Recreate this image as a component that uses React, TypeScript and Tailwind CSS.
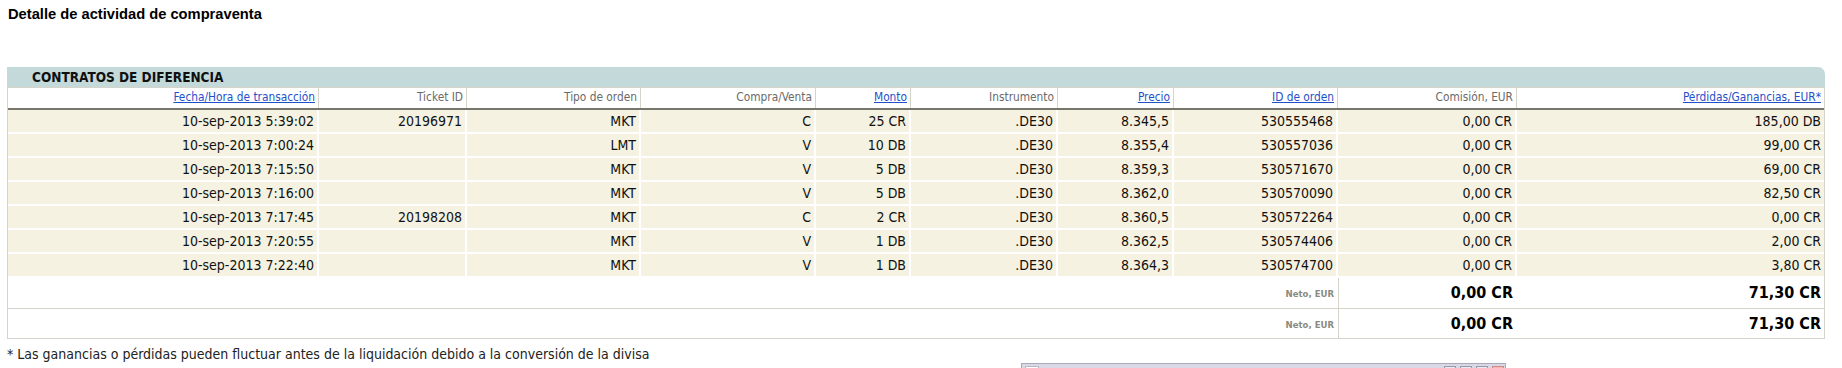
import React from 'react';

const cols = [
  { label: 'Fecha/Hora de transacción', link: true },
  { label: 'Ticket ID' },
  { label: 'Tipo de orden' },
  { label: 'Compra/Venta' },
  { label: 'Monto', link: true },
  { label: 'Instrumento' },
  { label: 'Precio', link: true },
  { label: 'ID de orden', link: true },
  { label: 'Comisión, EUR' },
  { label: 'Pérdidas/Ganancias, EUR*', link: true },
];

const rows = [
  ['10-sep-2013 5:39:02', '20196971', 'MKT', 'C', '25 CR', '.DE30', '8.345,5', '530555468', '0,00 CR', '185,00 DB'],
  ['10-sep-2013 7:00:24', '', 'LMT', 'V', '10 DB', '.DE30', '8.355,4', '530557036', '0,00 CR', '99,00 CR'],
  ['10-sep-2013 7:15:50', '', 'MKT', 'V', '5 DB', '.DE30', '8.359,3', '530571670', '0,00 CR', '69,00 CR'],
  ['10-sep-2013 7:16:00', '', 'MKT', 'V', '5 DB', '.DE30', '8.362,0', '530570090', '0,00 CR', '82,50 CR'],
  ['10-sep-2013 7:17:45', '20198208', 'MKT', 'C', '2 CR', '.DE30', '8.360,5', '530572264', '0,00 CR', '0,00 CR'],
  ['10-sep-2013 7:20:55', '', 'MKT', 'V', '1 DB', '.DE30', '8.362,5', '530574406', '0,00 CR', '2,00 CR'],
  ['10-sep-2013 7:22:40', '', 'MKT', 'V', '1 DB', '.DE30', '8.364,3', '530574700', '0,00 CR', '3,80 CR'],
];

const grid = 'grid grid-cols-[311px_148px_174px_175px_95px_147px_116px_164px_179px_307px]';

function SummaryRow({ last }: { last?: boolean }) {
  return (
    <div className={`flex ${last ? 'h-[29px]' : 'h-[31px] border-b border-[#d6d3ca]'}`}>
      <div className="w-[1330px] flex items-center justify-end pr-[4px] pt-[3px] text-[9.5px] font-bold text-[#8a8a80]">
        Neto, EUR
      </div>
      <div className="w-[179px] border-l border-[#d6d3ca] flex items-center justify-end pr-[4px] text-[16px] font-bold text-black">
        0,00 CR
      </div>
      <div className="flex-1 flex items-center justify-end pr-[3px] text-[16px] font-bold text-black">
        71,30 CR
      </div>
    </div>
  );
}

export default function App() {
  return (
    <div
      className="relative h-[368px] w-full overflow-hidden bg-white"
      style={{ fontFamily: '"DejaVu Sans Condensed", "DejaVu Sans", sans-serif' }}
    >
      {/* Title */}
      <h1
        className="pl-[8px] pt-[6px] text-[14.7px] leading-[17px] font-bold text-black"
        style={{ fontFamily: '"Liberation Sans", Arial, sans-serif' }}
      >
        Detalle de actividad de compraventa
      </h1>

      <div className="ml-[7px] mt-[44px] w-[1818px]">
        {/* Section band */}
        <div className="h-[20px] rounded-tr-[7px] bg-[#c3d9da] pl-[25px] flex items-center text-[13.5px] font-bold text-[#101010]">
          CONTRATOS DE DIFERENCIA
        </div>

        <div className="border-x border-b border-[#d6d3ca]">
          {/* Column headers */}
          <div className={`${grid} h-[23px] border-t border-b-2 border-t-[#d6d3ca] border-b-[#77766a] bg-white`}>
            {cols.map((c, i) => (
              <div
                key={c.label}
                className={`flex items-center justify-end pr-[3px] text-[11.8px] ${
                  i < cols.length - 1 ? 'border-r border-[#d6d3ca]' : ''
                }`}
              >
                {c.link ? (
                  <a href="#" className="text-[#1f50c9] underline">
                    {c.label}
                  </a>
                ) : (
                  <span className="text-[#6a6a6a]">{c.label}</span>
                )}
              </div>
            ))}
          </div>

          {/* Data rows */}
          {rows.map((r, ri) => (
            <div key={ri} className={`${grid} h-[24px] border-b-2 border-white`}>
              {r.map((v, ci) => (
                <div
                  key={ci}
                  className={`flex items-center justify-end bg-[#f5f2e1] pr-[3px] text-[14px] text-[#111] ${
                    ci < r.length - 1 ? 'border-r-2 border-white' : ''
                  }`}
                >
                  {v}
                </div>
              ))}
            </div>
          ))}

          <SummaryRow />
          <SummaryRow last />
        </div>
      </div>

      {/* Footnote */}
      <p className="mt-[7px] pl-[7px] text-[14px] leading-[16px] text-[#222]">
        * Las ganancias o pérdidas pueden fluctuar antes de la liquidación debido a la conversión de la divisa
      </p>

      {/* Partially visible window at the bottom */}
      <div className="absolute left-[1021px] top-[363px] h-[20px] w-[485px] border border-[#a9a9bd] bg-[#d9d9e6]">
        <div className="flex items-start pt-[2px] pl-[3px] pr-[1px]">
          <div className="h-[10px] w-[14px] border border-[#b8b8c8] bg-white" />
          <div className="ml-auto flex gap-[4px]">
            <div className="h-[10px] w-[12px] border border-[#9a9aae] bg-[#e8e8f0]" />
            <div className="h-[10px] w-[12px] border border-[#9a9aae] bg-[#e8e8f0]" />
            <div className="h-[10px] w-[12px] border border-[#9a9aae] bg-[#e8e8f0]" />
            <div className="h-[10px] w-[12px] border border-[#d08a8a] bg-[#f2b9b9]" />
          </div>
        </div>
      </div>
    </div>
  );
}
